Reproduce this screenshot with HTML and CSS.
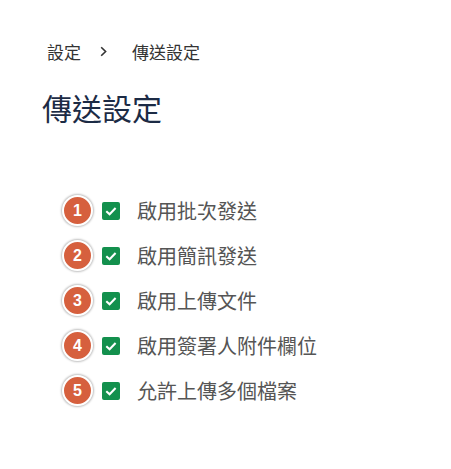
FILE: index.html
```html
<!DOCTYPE html>
<html lang="zh-Hant">
<head>
<meta charset="utf-8">
<link rel="stylesheet" href="styles.css">
</head>
<body>
<div class="page">
  <nav class="crumbs">
    <span class="crumb">設定</span>
    <svg class="chev" width="7" height="11" viewBox="0 0 7 11"><path d="M1.2 1.2 L5.6 5.5 L1.2 9.8" fill="none" stroke="#333" stroke-width="1.6"/></svg>
    <span class="crumb">傳送設定</span>
  </nav>
  <h1 class="title">傳送設定</h1>
  <ul class="list">
    <li class="row"><span class="badge">1</span><span class="check"><svg width="18" height="18" viewBox="0 0 18 18"><path d="M4.3 9.2 L7.6 12.2 L13.6 6" fill="none" stroke="#fff" stroke-width="2.1"/></svg></span><span class="label">啟用批次發送</span></li>
    <li class="row"><span class="badge">2</span><span class="check"><svg width="18" height="18" viewBox="0 0 18 18"><path d="M4.3 9.2 L7.6 12.2 L13.6 6" fill="none" stroke="#fff" stroke-width="2.1"/></svg></span><span class="label">啟用簡訊發送</span></li>
    <li class="row"><span class="badge">3</span><span class="check"><svg width="18" height="18" viewBox="0 0 18 18"><path d="M4.3 9.2 L7.6 12.2 L13.6 6" fill="none" stroke="#fff" stroke-width="2.1"/></svg></span><span class="label">啟用上傳文件</span></li>
    <li class="row"><span class="badge">4</span><span class="check"><svg width="18" height="18" viewBox="0 0 18 18"><path d="M4.3 9.2 L7.6 12.2 L13.6 6" fill="none" stroke="#fff" stroke-width="2.1"/></svg></span><span class="label">啟用簽署人附件欄位</span></li>
    <li class="row"><span class="badge">5</span><span class="check"><svg width="18" height="18" viewBox="0 0 18 18"><path d="M4.3 9.2 L7.6 12.2 L13.6 6" fill="none" stroke="#fff" stroke-width="2.1"/></svg></span><span class="label">允許上傳多個檔案</span></li>
  </ul>
</div>
</body>
</html>
```
FILE: styles.css
```css
html, body {
  margin: 0;
  padding: 0;
  background: #fff;
}
body {
  font-family: "Noto Sans CJK TC", "Noto Sans", sans-serif;
}
.page {
  padding-top: 39px;
}
.crumbs {
  display: flex;
  align-items: center;
  height: 24px;
  margin-left: 47px;
  font-size: 17px;
  color: #333;
}
.chev {
  margin: 0 25px 0 19px;
}
.title {
  margin: 24px 0 0 42px;
  font-size: 30px;
  line-height: 40px;
  font-weight: 400;
  color: #1c2b45;
}
.list {
  list-style: none;
  margin: 61px 0 0 0;
  padding: 0 0 0 62px;
}
.row {
  display: flex;
  align-items: center;
  height: 45px;
}
.badge {
  box-sizing: border-box;
  width: 31px;
  height: 31px;
  border-radius: 50%;
  background: #d6603e;
  border: 2px solid #fff;
  box-shadow: 0 0 2px 1px rgba(0,0,0,0.25);
  color: #fff;
  font-family: "Liberation Sans", Arial, sans-serif;
  font-weight: 700;
  font-size: 16px;
  display: flex;
  align-items: center;
  justify-content: center;
  margin-right: 9px;
}
.check {
  width: 18px;
  height: 18px;
  border-radius: 2px;
  background: #13904d;
  display: flex;
  margin-right: 17px;
}
.label {
  font-size: 20px;
  color: #555;
  line-height: 1;
}
```
